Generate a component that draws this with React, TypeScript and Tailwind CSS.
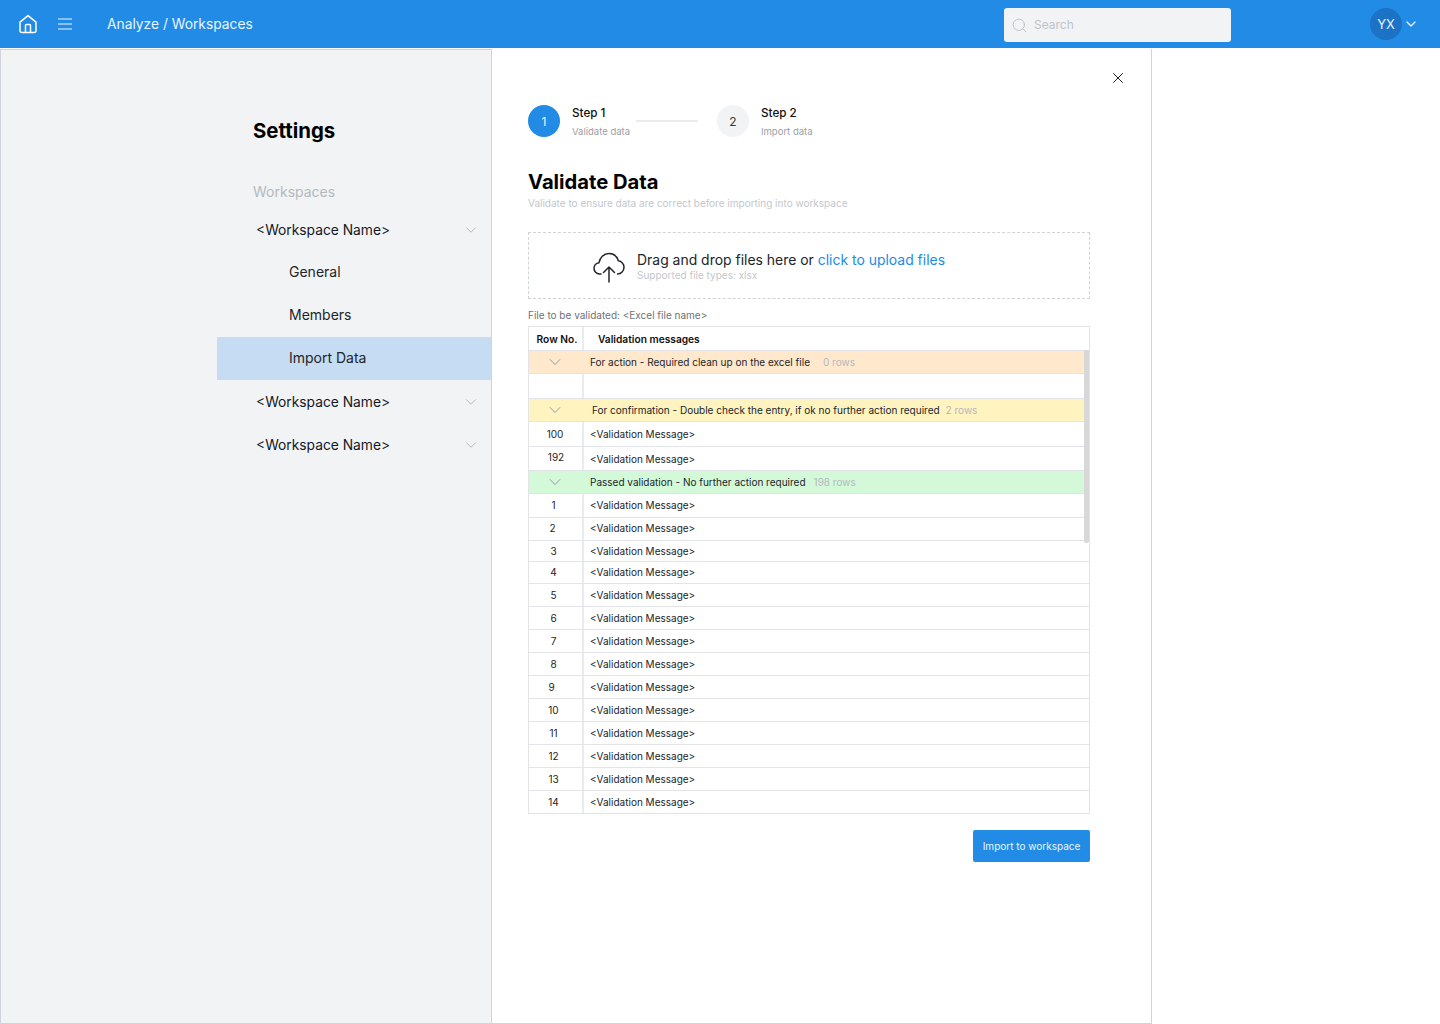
import { ChevronDown, X, Search } from "lucide-react";

const Chev = ({ className }: { className: string }) => (
  <ChevronDown className={className} strokeWidth={1.25} />
);

function NavGroup({ label }: { label: string }) {
  return (
    <div className="h-[43px] flex items-center justify-between pl-[39px] pr-[11px] text-[13.8px] text-[#111827]">
      <span className="pt-[2px]">{label}</span>
      <Chev className="w-[18px] h-[18px] text-[#adb5bd]" />
    </div>
  );
}

function NavItem({ label, active }: { label: string; active?: boolean }) {
  return (
    <div className={`h-[43px] flex items-center pl-[72px] pb-[2px] text-[14px] text-[#212529] ${active ? "bg-[#c5dcf2]" : ""}`}>
      {label}
    </div>
  );
}

function GroupRow({ bg, label, count, pl, gap }: { bg: string; label: string; count: string; pl: string; gap: string }) {
  return (
    <div className={`flex h-[23px] ${bg} border-b border-[#e2e4e9]`}>
      <div className="w-[55px] shrink-0 flex items-center justify-center pr-[3px]">
        <Chev className="w-5 h-5 text-[#a6abb3]" />
      </div>
      <div className={`flex items-center ${pl} ${gap} text-[10px] text-[#212529]`}>
        <span>{label}</span>
        <span className="text-[#b4b8bf]">{count}</span>
      </div>
    </div>
  );
}

function Row({ n, h, tx = "pr-[4px]", msg = "" }: { n: string; h: string; tx?: string; msg?: string }) {
  return (
    <div className={`flex ${h} border-b border-[#e2e4e9]`}>
      <div className={`w-[55px] shrink-0 border-r-2 border-[#e9ebef] flex items-center justify-center text-[10px] text-[#212529] ${tx}`}>{n}</div>
      <div className={`flex items-center pl-[6px] text-[10px] text-[#212529] ${msg}`}>&lt;Validation Message&gt;</div>
    </div>
  );
}

export default function App() {
  const rows: [string, string, string?, string?][] = [
    ["1", "h-[24px]", "pr-[4px] pb-px", "pb-px"], ["2", "h-[23px]", "pr-[6px] pb-px", "pb-px"], ["3", "h-[21px]"], ["4", "h-[22px]"], ["5", "h-[23px]"], ["6", "h-[23px]"], ["7", "h-[23px]"],
    ["8", "h-[23px]"], ["9", "h-[23px]", "pr-[8px]"], ["10", "h-[23px]"], ["11", "h-[23px]"], ["12", "h-[23px]"], ["13", "h-[23px]"], ["14", "h-[23px]"],
  ];
  return (
    <div className="w-[1440px] h-[1024px] bg-white flex flex-col font-['Inter',sans-serif] overflow-hidden">
      <header className="h-[48px] shrink-0 bg-[#228be6] flex items-center text-white">
        <svg className="ml-[18px] w-5 h-5" viewBox="0 0 20 20" fill="none" stroke="white" strokeWidth="1.5" strokeLinejoin="round">
          <path d="M2 8.2 10 1.6l8 6.6v8.4a2 2 0 0 1-2 2H4a2 2 0 0 1-2-2z" />
          <path d="M7.5 18.5v-7a1 1 0 0 1 1-1h3a1 1 0 0 1 1 1v7" />
        </svg>
        <svg className="ml-[20px] w-[14px] h-[12px]" viewBox="0 0 14 12" stroke="#a9d2f6" strokeWidth="1.5">
          <path d="M0 1h14M0 6h14M0 11h14" />
        </svg>
        <span className="ml-[35px] text-[13.8px] text-[#e7f5ff]">Analyze / Workspaces</span>
        <div className="ml-auto mt-[2px] w-[227px] h-[34px] bg-[#f1f3f5] rounded-[3px] flex items-center pl-[7px] gap-[6px] text-[#bfc3c9] text-[12px]">
          <Search className="w-[17px] h-[17px] text-[#b9bdc4]" strokeWidth={1.25} />
          <span>Search</span>
        </div>
        <div className="ml-[139px] w-8 h-8 rounded-full bg-[#1c72c4] flex items-center justify-center pt-px text-[13px] text-[#e7f5ff]">YX</div>
        <ChevronDown className="ml-px mr-[21px] w-[16px] h-[16px] text-[#e7f5ff]" strokeWidth={2} />
      </header>

      <div className="flex-1 flex pt-px">
        <aside className="w-[492px] h-[975px] shrink-0 bg-[#f1f3f5] border border-[#ced4da] flex flex-col pl-[216px]">
          <h2 className="mt-[66px] pl-9 text-[20.4px] leading-[30px] font-bold text-black">Settings</h2>
          <div className="mt-[36px] pl-9 text-[14px] leading-[20px] text-[#b4b9c0]">Workspaces</div>
          <div className="mt-[6px]">
            <NavGroup label="<Workspace Name>" />
            <NavItem label="General" />
            <NavItem label="Members" />
            <NavItem label="Import Data" active />
            <NavGroup label="<Workspace Name>" />
            <NavGroup label="<Workspace Name>" />
          </div>
        </aside>

        <main className="w-[660px] h-[975px] relative shrink-0 bg-white border-r border-b border-[#ced4da] pl-9 pr-[61px] flex flex-col">
          <button className="absolute top-[20px] right-[24px] text-[#111]">
            <X className="w-[18px] h-[18px]" strokeWidth={1.25} />
          </button>

          <div className="mt-[56px] flex items-center h-8">
            <div className="w-8 h-8 rounded-full bg-[#228be6] flex items-center justify-center pt-px text-[12px] text-[#e7f5ff]">1</div>
            <div className="ml-3 w-[64px] pt-[5px]">
              <div className="text-[11.7px] leading-[16px] font-medium text-[#111] -mt-1">Step 1</div>
              <div className="mt-[4px] text-[9.5px] leading-[14px] text-[#9aa0a8] whitespace-nowrap">Validate data</div>
            </div>
            <div className="w-[62px] h-[2px] bg-[#e9ecef]" />
            <div className="ml-[19px] w-8 h-8 rounded-full bg-[#f1f3f5] flex items-center justify-center pt-px text-[12px] text-[#343a40]">2</div>
            <div className="ml-3 pt-[5px]">
              <div className="text-[11.7px] leading-[16px] font-medium text-[#111] -mt-1">Step 2</div>
              <div className="mt-[4px] text-[9.5px] leading-[14px] text-[#9aa0a8]">Import data</div>
            </div>
          </div>

          <h1 className="mt-[30px] text-[20.2px] leading-[30px] font-bold text-black">Validate Data</h1>
          <p className="-mt-px text-[10px] leading-[14px] text-[#c3c7cd]">Validate to ensure data are correct before importing into workspace</p>

          <div className="mt-[22px] h-[67px] border border-dashed border-[#ced4da] flex items-center pl-[63px]">
            <svg className="w-[34px] h-[34px] mt-[3px]" viewBox="0 0 34 34" fill="none" stroke="#212529" strokeWidth="1.5" strokeLinecap="round" strokeLinejoin="round">
              <path d="M9 24H7.500A5.700 5.700 0 0 1 2 18.300c0-3 2.200-5.300 5-5.600C7.800 8 11.600 3.500 17 3.500c4.600 0 8 3 9.300 7.200 3.300.4 5.700 3.300 5.700 6.600 0 3.700-2.900 6.700-6.500 6.700" />
              <path d="M17 32V17M11.500 22.500 17 17l5.500 5.500" />
            </svg>
            <div className="ml-[11px]">
              <div className="pt-px text-[13.95px] leading-[18px] text-[#212529]">Drag and drop files here or <span className="text-[#228be6]">click to upload files</span></div>
              <div className="text-[10px] leading-[12px] text-[#c3c7cd]">Supported file types: xlsx</div>
            </div>
          </div>

          <div className="mt-[9px] text-[10px] leading-[14px] text-[#6c727a]">File to be validated: &lt;Excel file name&gt;</div>

          <div className="mt-[4px] relative w-[562px] border-x border-t border-[#e2e4e9]">
            <div className="flex h-[24px] border-b border-[#e2e4e9] text-[10.2px] font-semibold text-[#111]">
              <div className="w-[55px] shrink-0 border-r-2 border-[#e9ebef] flex items-center justify-center pl-[3px] pt-[3px]">Row No.</div>
              <div className="flex items-center pl-[14px] pt-[3px]">Validation messages</div>
            </div>
            <GroupRow bg="bg-[#ffe8cc]" label="For action - Required clean up on the excel file" count="0 rows" pl="pl-[6px]" gap="gap-[13px]" />
            <div className="flex h-[25px] border-b border-[#e2e4e9]">
              <div className="w-[55px] shrink-0 border-r-2 border-[#e9ebef]" />
            </div>
            <GroupRow bg="bg-[#fff3bf]" label="For confirmation - Double check the entry, if ok no further action required" count="2 rows" pl="pl-[8px]" gap="gap-[6px]" />
            <Row n="100" h="h-[25px]" tx="pr-[1px]" />
            <Row n="192" h="h-[24px]" tx="pl-[1px] pb-[2px]" msg="pt-[2px]" />
            <GroupRow bg="bg-[#d3f9d8]" label="Passed validation - No further action required" count="198 rows" pl="pl-[6px]" gap="gap-[8px]" />
            {rows.map(([n, h, tx, msg]) => <Row key={n} n={n} h={h} tx={tx} msg={msg} />)}
            <div className="absolute top-[23px] right-0 w-[5px] h-[193px] rounded-b-[2px] bg-[#d8d8d8]" />
          </div>

          <div className="mt-4 flex justify-end">
            <button className="w-[117px] h-8 bg-[#228be6] rounded-[2px] text-[10px] text-[#e7f5ff]">Import to workspace</button>
          </div>
        </main>
      </div>
    </div>
  );
}
